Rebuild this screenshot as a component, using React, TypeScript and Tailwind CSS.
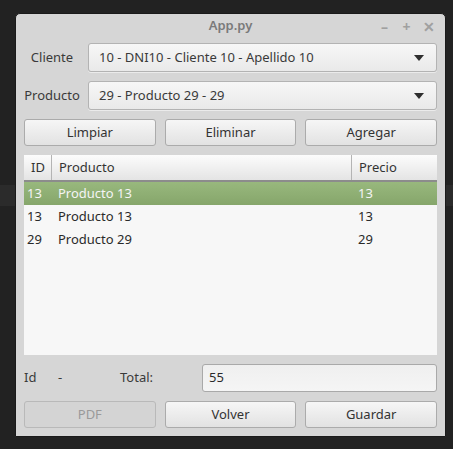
import React from 'react';

const rows = [
  { id: '13', producto: 'Producto 13', precio: '13', selected: true },
  { id: '13', producto: 'Producto 13', precio: '13', selected: false },
  { id: '29', producto: 'Producto 29', precio: '29', selected: false },
];

const Combo = ({ value }: { value: string }) => (
  <div className="flex-1 h-[29px] flex items-center justify-between pl-[10px] pr-[12px] rounded-[3px] border border-[#b3b3b3] bg-[linear-gradient(to_bottom,#f7f7f7,#e9e9e9)] shadow-[0_1px_0_rgba(255,255,255,0.5)]">
    <span>{value}</span>
    <svg width="10" height="6" viewBox="0 0 10 6">
      <path d="M0 0 L10 0 L5 6 Z" fill="#2e2e2e" />
    </svg>
  </div>
);

const Button = ({ label, disabled }: { label: string; disabled?: boolean }) => (
  <button
    className={
      disabled
        ? 'h-[27px] rounded-[3px] border border-[#b9b9b9] bg-[#d4d4d4] text-[#9a9a9a]'
        : 'h-[27px] rounded-[3px] border border-[#ababab] bg-[linear-gradient(to_bottom,#f6f6f6,#e2e2e2)] text-[#333]'
    }
  >
    {label}
  </button>
);

export default function App() {
  return (
    <div className="w-[453px] h-[449px] overflow-hidden pt-[13px] pl-[15px] bg-[linear-gradient(to_bottom,#222_0,#222_185px,#2b2b2b_185px,#2b2b2b_206px,#222_206px)] font-['Noto_Sans',sans-serif] text-[13px] text-[#3a3a3a]">
      {/* Window */}
      <div className="w-[431px] h-[424px] rounded-t-[5px] border border-[#1a1a1a] bg-[#d6d6d6] flex flex-col">
        {/* Title bar */}
        <div className="h-[29px] relative flex justify-center pt-[2px]">
          <span className="font-semibold text-[#7a7a7a]">App.py</span>
          <div className="absolute right-[10px] top-[2px] flex items-center gap-[9px] text-[#a0a0a0] font-bold text-[14px]">
            <span className="w-[13px] text-center">–</span>
            <span className="w-[13px] text-center">+</span>
            <span className="w-[13px] text-center">✕</span>
          </div>
        </div>

        <div className="flex flex-col gap-[9px] px-[8px]">
          <div className="flex items-center gap-[8px]">
            <span className="w-[56px] text-center">Cliente</span>
            <Combo value="10 - DNI10 - Cliente 10 - Apellido 10" />
          </div>
          <div className="flex items-center gap-[8px]">
            <span className="w-[56px] text-center">Producto</span>
            <Combo value="29 - Producto 29 - 29" />
          </div>

          <div className="grid grid-cols-3 gap-[9px]">
            <Button label="Limpiar" />
            <Button label="Eliminar" />
            <Button label="Agregar" />
          </div>

          {/* Table */}
          <div className="h-[200px] w-[413px] bg-[#f7f7f7] flex flex-col">
            <div className="h-[27px] flex bg-[linear-gradient(to_bottom,#fcfcfc,#e4e4e4)] border-b-2 border-[#8c8c8c] text-[#333]">
              <div className="w-[28px] pl-[7px] flex items-center border-r border-[#b4b4b4]">ID</div>
              <div className="w-[300px] pl-[7px] flex items-center border-r border-[#b4b4b4]">Producto</div>
              <div className="flex-1 pl-[7px] flex items-center">Precio</div>
            </div>
            {rows.map((r, i) => (
              <div
                key={i}
                className={
                  r.selected
                    ? 'h-[23px] flex items-center bg-[linear-gradient(to_bottom,#98b87d,#86a66b)] text-[#f4f4f4]'
                    : 'h-[23px] flex items-center text-[#2a2a2a]'
                }
              >
                <div className="w-[28px] pl-[3px]">{r.id}</div>
                <div className="w-[300px] pl-[6px]">{r.producto}</div>
                <div className="flex-1 pl-[6px]">{r.precio}</div>
              </div>
            ))}
          </div>

          {/* Totals */}
          <div className="flex items-center h-[28px]">
            <span className="w-[34px]">Id</span>
            <span className="w-[62px]">-</span>
            <span className="w-[82px]">Total:</span>
            <div className="flex-1 h-[28px] flex items-center pl-[6px] rounded-[3px] border border-[#a9a9a9] bg-[linear-gradient(to_bottom,#efefef,#f5f5f5)] text-[#2a2a2a]">
              55
            </div>
          </div>

          <div className="grid grid-cols-3 gap-[9px]">
            <Button label="PDF" disabled />
            <Button label="Volver" />
            <Button label="Guardar" />
          </div>
        </div>
      </div>
    </div>
  );
}
